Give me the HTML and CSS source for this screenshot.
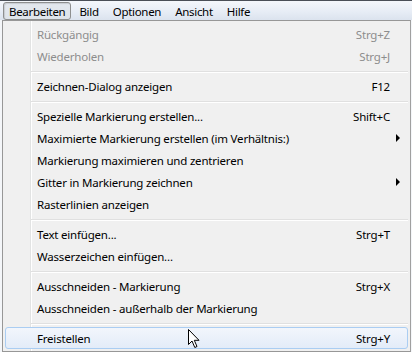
FILE: index.html
```html
<!DOCTYPE html>
<html>

<head>
  <meta charset="utf-8" />
  <title>Bearbeiten</title>
  <link rel="stylesheet" href="styles.css">
</head>

<body>
  <div class="menubar">
    <span class="topitem pressed">Bearbeiten</span>
    <span class="topitem">Bild</span>
    <span class="topitem">Optionen</span>
    <span class="topitem">Ansicht</span>
    <span class="topitem">Hilfe</span>
  </div>

  <div class="dropdown">
    <div class="item disabled"><span class="label">Rückgängig</span><span class="key">Strg+Z</span></div>
    <div class="item disabled"><span class="label">Wiederholen</span><span class="key">Strg+J</span></div>
    <div class="sep"></div>
    <div class="item"><span class="label">Zeichnen-Dialog anzeigen</span><span class="key">F12</span></div>
    <div class="sep"></div>
    <div class="item"><span class="label">Spezielle Markierung erstellen...</span><span class="key">Shift+C</span></div>
    <div class="item sub"><span class="label">Maximierte Markierung erstellen (im Verhältnis:)</span><span class="arrow"></span></div>
    <div class="item"><span class="label">Markierung maximieren und zentrieren</span></div>
    <div class="item sub"><span class="label">Gitter in Markierung zeichnen</span><span class="arrow"></span></div>
    <div class="item"><span class="label">Rasterlinien anzeigen</span></div>
    <div class="sep"></div>
    <div class="item"><span class="label">Text einfügen...</span><span class="key">Strg+T</span></div>
    <div class="item"><span class="label">Wasserzeichen einfügen...</span></div>
    <div class="sep"></div>
    <div class="item"><span class="label">Ausschneiden - Markierung</span><span class="key">Strg+X</span></div>
    <div class="item"><span class="label">Ausschneiden - außerhalb der Markierung</span></div>
    <div class="sep"></div>
    <div class="item hover"><span class="label">Freistellen</span><span class="key">Strg+Y</span></div>
  </div>

  <!-- mauszeiger -->
  <svg class="cursor" width="13" height="20" viewBox="0 0 13 20">
    <path d="M0.5 0.5 L0.5 15.5 L4 12 L6.8 18.5 L9 17.5 L6.3 11.3 L11 11.3 Z" fill="#fff" stroke="#000" stroke-width="1" stroke-linejoin="miter" />
  </svg>
</body>

</html>
```

FILE: styles.css
```css
html {
  width: 100%;
  height: 100%;
}

body {
  width: 412px;
  height: 352px;
  margin: 0;
  padding: 0;
  overflow: hidden;
  position: relative;
  background: #f4f6f9;
  font-family: "Noto Sans", "Open Sans", sans-serif;
  font-size: 11.5px;
  letter-spacing: -0.2px;
  color: #000;
}

.menubar {
  height: 20px;
  display: flex;
  align-items: center;
  padding-left: 3px;
  box-sizing: border-box;
  border-top: 1px solid #4a4f57;
  background: linear-gradient(#f4f7fb, #e6ecf5 60%, #dbe3ee);
  letter-spacing: -0.3px;
}

.topitem {
  height: 18px;
  line-height: 17px;
  padding: 0 5px;
  margin-right: 2px;
  box-sizing: border-box;
  border: 1px solid transparent;
}

.topitem.pressed {
  border-color: #8e8f8f;
  border-radius: 3px;
  background: linear-gradient(#e3e8ee, #dfe4ea);
  box-shadow: inset 1px 1px 1px rgba(0, 0, 0, 0.12);
}

.dropdown {
  margin-left: 2px;
  width: 409px;
  height: 332px;
  box-sizing: border-box;
  border: 1px solid #979797;
  border-right-color: #a0a0a0;
  padding: 2px;
  background: linear-gradient(to right, transparent 27px, #e2e3e3 27px, #e2e3e3 28px, #fff 28px, #fff 29px, transparent 29px), #f0f0f0;
}

.item {
  height: 22px;
  display: flex;
  align-items: center;
  padding-left: 31px;
  padding-right: 17px;
  box-sizing: border-box;
  border: 1px solid transparent;
}

.item .label {
  flex: 1;
  white-space: nowrap;
}

.item .key {
  white-space: nowrap;
}

.item.disabled {
  color: #8d8d8d;
}

.item .arrow {
  width: 0;
  height: 0;
  margin-right: -10px;
  border-top: 4px solid transparent;
  border-bottom: 4px solid transparent;
  border-left: 4px solid #000;
}

.item.hover {
  border-color: #aacdf2;
  border-radius: 3px;
  background: linear-gradient(#f2f6fc, #e3ecf8);
}

.sep {
  height: 1px;
  margin: 4px 0 2px 26px;
  background: #e0e0e0;
  border-bottom: 1px solid #fff;
}

.cursor {
  position: absolute;
  left: 188px;
  top: 329px;
}
```
